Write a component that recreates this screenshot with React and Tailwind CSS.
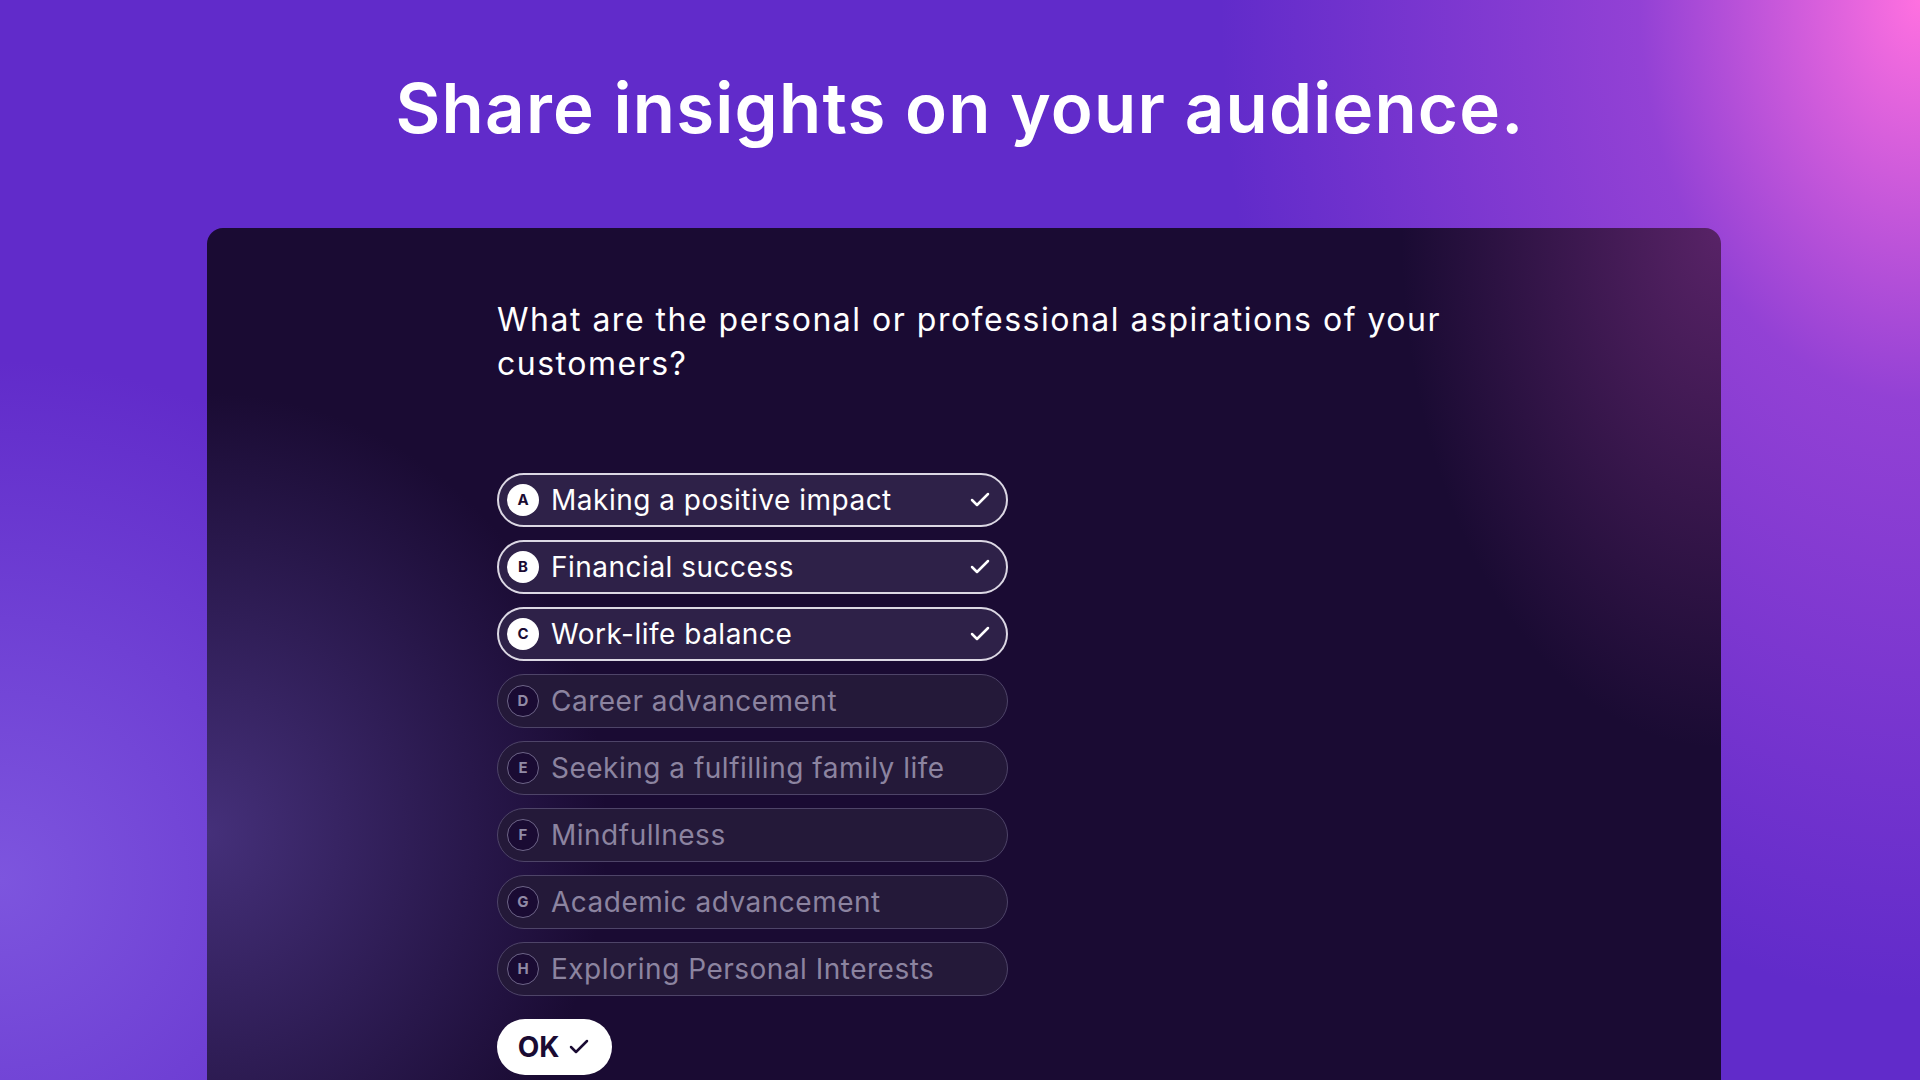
import React from 'react';
import { Check } from 'lucide-react';

const options = [
  { key: 'A', label: 'Making a positive impact', selected: true },
  { key: 'B', label: 'Financial success', selected: true },
  { key: 'C', label: 'Work-life balance', selected: true },
  { key: 'D', label: 'Career advancement', selected: false },
  { key: 'E', label: 'Seeking a fulfilling family life', selected: false },
  { key: 'F', label: 'Mindfullness', selected: false },
  { key: 'G', label: 'Academic advancement', selected: false },
  { key: 'H', label: 'Exploring Personal Interests', selected: false },
];

const Option = ({ item }) => {
  if (item.selected) {
    return (
      <div className="flex items-center h-[54px] w-[511px] rounded-full border-2 border-[#dcd8e4] bg-[#2e2148] pl-[8px] pr-[14px]">
        <span className="flex items-center justify-center w-[32px] h-[32px] rounded-full bg-white text-[#1a0b33] text-[15px] font-bold">
          {item.key}
        </span>
        <span className="ml-[12px] flex-1 text-[28px] tracking-[0.5px] text-white leading-none">{item.label}</span>
        <Check size={24} strokeWidth={2.5} className="text-white" />
      </div>
    );
  }
  return (
    <div className="flex items-center h-[54px] w-[511px] rounded-full border border-[#4e4468] bg-[#241939] pl-[9px] pr-[14px]">
      <span className="flex items-center justify-center w-[32px] h-[32px] rounded-full border-[1.5px] border-[#6e6588] bg-[#1a0b33] text-[#918aa6] text-[15px] font-bold">
        {item.key}
      </span>
      <span className="ml-[12px] flex-1 text-[28px] tracking-[0.5px] text-[#8c84a0] leading-none">{item.label}</span>
    </div>
  );
};

const App = () => {
  return (
    <div className="h-screen w-full overflow-hidden font-[Inter,sans-serif] bg-[#612bca] bg-[image:radial-gradient(ellipse_700px_1000px_at_100%_0%,#ff70e0_0%,rgba(180,80,220,0.6)_40%,rgba(97,43,202,0)_100%),radial-gradient(ellipse_520px_520px_at_0%_880px,#7d55de_0%,rgba(97,43,202,0)_100%)]">
      <h1 className="pt-[67px] text-center text-[69px] leading-[82px] font-semibold text-white tracking-[1.2px]">
        Share insights on your audience.
      </h1>

      <div className="mt-[79px] ml-[207px] w-[1514px] h-[900px] rounded-2xl bg-[#1a0b33] bg-[image:radial-gradient(ellipse_320px_520px_at_100%_0%,rgba(115,45,125,0.7)_0%,rgba(26,11,51,0)_100%),radial-gradient(ellipse_400px_440px_at_0px_605px,#45307a_0%,rgba(26,11,51,0)_100%)] pl-[290px] pt-[70px]">
        <p className="text-[32px] leading-[44px] tracking-[1.5px] text-white">
          What are the personal or professional aspirations of your
          <br />
          customers?
        </p>

        <div className="mt-[87px] flex flex-col gap-[13px]">
          {options.map((item) => (
            <Option key={item.key} item={item} />
          ))}
        </div>

        <button className="mt-[23px] flex items-center justify-center gap-[8px] h-[56px] w-[115px] rounded-full bg-white text-[#1a0b33] text-[28px] font-bold">
          OK
          <Check size={24} strokeWidth={2.5} className="text-[#1a0b33]" />
        </button>
      </div>
    </div>
  );
};

export default App;
